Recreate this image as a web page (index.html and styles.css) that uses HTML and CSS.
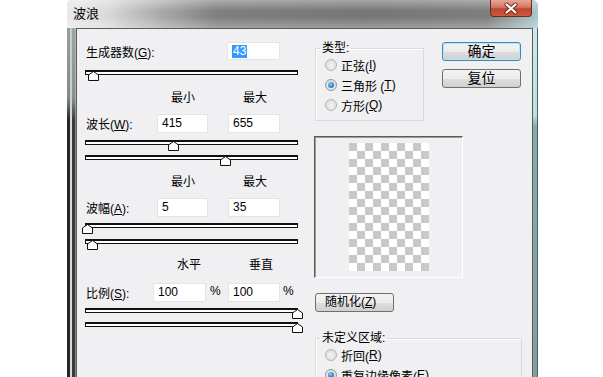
FILE: index.html
```html
<!DOCTYPE html>
<html>
<head>
  <meta charset="UTF-8" />
  <title>波浪</title>
  <link rel="stylesheet" href="styles.css">
</head>
<body>

<div class="window">
  <div class="titlebar">
    <span class="title">波浪</span>
    <div class="close-btn">
      <svg width="42" height="17" viewBox="0 0 42 17">
        <path d="M16.5 4.5 L25.5 12.5 M25.5 4.5 L16.5 12.5" stroke="#6a2219" stroke-width="4" stroke-linecap="round"/>
        <path d="M16.5 4.5 L25.5 12.5 M25.5 4.5 L16.5 12.5" stroke="#ffffff" stroke-width="2.2" stroke-linecap="round"/>
      </svg>
    </div>
  </div>

  <div class="frame">
    <div class="frame-left"></div>

    <div class="content">
      <!-- left column: numeric settings -->
      <div class="left-col">
        <div class="row row-gen">
          <span class="label label-gen">生成器数(<u>G</u>):</span>
          <div class="field field-gen"><span class="sel">43</span></div>
        </div>
        <div class="slider s1">
          <svg class="thumb" style="left:2px" width="11" height="10" viewBox="0 0 11 10"><polygon points="5.5,0.5 10.5,4 10.5,9.5 0.5,9.5 0.5,4"/></svg>
        </div>

        <div class="head head-minmax h1"><span>最小</span><span>最大</span></div>
        <div class="row row-wl">
          <span class="label label-wl">波长(<u>W</u>):</span>
          <div class="field f-min">415</div>
          <div class="field f-max">655</div>
        </div>
        <div class="slider s2">
          <svg class="thumb" style="left:82px" width="11" height="10" viewBox="0 0 11 10"><polygon points="5.5,0.5 10.5,4 10.5,9.5 0.5,9.5 0.5,4"/></svg>
        </div>
        <div class="slider s3">
          <svg class="thumb" style="left:134px" width="11" height="10" viewBox="0 0 11 10"><polygon points="5.5,0.5 10.5,4 10.5,9.5 0.5,9.5 0.5,4"/></svg>
        </div>

        <div class="head head-minmax h2"><span>最小</span><span>最大</span></div>
        <div class="row row-amp">
          <span class="label label-wl">波幅(<u>A</u>):</span>
          <div class="field f-min">5</div>
          <div class="field f-max">35</div>
        </div>
        <div class="slider s4">
          <svg class="thumb" style="left:-4px" width="11" height="10" viewBox="0 0 11 10"><polygon points="5.5,0.5 10.5,4 10.5,9.5 0.5,9.5 0.5,4"/></svg>
        </div>
        <div class="slider s5">
          <svg class="thumb" style="left:1px" width="11" height="10" viewBox="0 0 11 10"><polygon points="5.5,0.5 10.5,4 10.5,9.5 0.5,9.5 0.5,4"/></svg>
        </div>

        <div class="head head-scale"><span>水平</span><span>垂直</span></div>
        <div class="row row-scale">
          <span class="label label-scale">比例(<u>S</u>):</span>
          <div class="field f-sx">100</div>
          <span class="pct">%</span>
          <div class="field f-max">100</div>
          <span class="pct pct-last">%</span>
        </div>
        <div class="slider s6">
          <svg class="thumb" style="left:206px" width="11" height="10" viewBox="0 0 11 10"><polygon points="5.5,0.5 10.5,4 10.5,9.5 0.5,9.5 0.5,4"/></svg>
        </div>
        <div class="slider s7">
          <svg class="thumb" style="left:206px" width="11" height="10" viewBox="0 0 11 10"><polygon points="5.5,0.5 10.5,4 10.5,9.5 0.5,9.5 0.5,4"/></svg>
        </div>
      </div>

      <!-- right column: type, buttons, preview -->
      <div class="right-col">
        <div class="top-row">
          <fieldset class="group group-type">
            <legend>类型:</legend>
            <div class="radio"><span class="dot"></span>正弦(<u>I</u>)</div>
            <div class="radio"><span class="dot on"></span>三角形 (<u>T</u>)</div>
            <div class="radio"><span class="dot"></span>方形(<u>Q</u>)</div>
          </fieldset>
          <div class="buttons">
            <div class="btn btn-default">确定</div>
            <div class="btn btn-reset">复位</div>
          </div>
        </div>

        <div class="preview">
          <div class="checker"></div>
        </div>

        <div class="btn btn-random">随机化(<u>Z</u>)</div>

        <fieldset class="group group-undef">
          <legend>未定义区域:</legend>
          <div class="radio"><span class="dot"></span>折回(<u>R</u>)</div>
          <div class="radio"><span class="dot on"></span>重复边缘像素(<u>E</u>)</div>
        </fieldset>
      </div>
    </div>

    <div class="frame-right"></div>
  </div>
</div>

</body>
</html>
```

FILE: styles.css
```css
body {
  margin: 0;
  background: #ffffff;
  overflow: hidden;
  height: 377px;
  font-family: "Liberation Sans", "Noto Sans CJK SC", sans-serif;
  font-size: 12px;
  color: #000;
}
.window {
  margin-left: 67px;
  width: 471px;
  height: 420px;
  display: flex;
  flex-direction: column;
  border-top-left-radius: 6px;
  border-top-right-radius: 6px;
  overflow: hidden;
  background: #80a0a3;
}
.titlebar {
  height: 28px;
  flex: none;
  display: flex;
  align-items: flex-start;
  background:
    linear-gradient(to bottom, rgba(255,255,255,0.35) 0, rgba(255,255,255,0) 11px, rgba(255,255,255,0) 17px, rgba(255,255,255,0.28) 28px),
    linear-gradient(to right, #e9e9e9 0, #dadada 40px, #a9a9a9 95px, #7f7f7f 150px, #767676 300px, #7e7e7e 420px, #a9c9ce 471px);
}
.title {
  font-size: 13px;
  line-height: 14px;
  margin: 7px 0 0 6px;
}
.close-btn {
  margin-left: auto;
  margin-right: 6px;
  width: 42px;
  height: 17px;
  box-sizing: border-box;
  border: 1px solid #6d2a21;
  border-top: none;
  border-radius: 0 0 4px 4px;
  background: linear-gradient(to bottom, #e6a796 0, #d27863 45%, #c1432f 55%, #cc5a3f 100%);
}
.close-btn svg {
  display: block;
  margin: 0 0 0 -1px;
}
.frame {
  flex: 1;
  display: flex;
}
.frame-left {
  width: 9px;
  flex: none;
  background:
    linear-gradient(to bottom, rgba(190,202,198,0.75) 0, rgba(190,202,198,0.6) 70px, rgba(190,202,198,0) 92px),
    linear-gradient(to right, #262626 0 3px, #d6d9d8 3px 5px, #3a3a3a 5px 8px, #8c8c8c 8px 9px);
}
.frame-right {
  width: 5px;
  flex: none;
  box-sizing: border-box;
  border-right: 1px solid #4f6062;
  background: linear-gradient(to bottom, #cbe9ee 0, #b9dfe4 88px, #89aaad 98px, #7d9da0 100%);
}
.content {
  width: 457px;
  box-sizing: border-box;
  border: 1px solid #5c5c5c;
  border-bottom: none;
  background: #f0eff1;
  display: flex;
  align-items: flex-start;
}

/* left column */
.left-col {
  width: 215px;
  margin-left: 8px;
  flex: none;
}
.row {
  display: flex;
  align-items: center;
  height: 19px;
}
.label {
  padding-left: 1px;
  box-sizing: border-box;
  flex: none;
}
.label-gen { width: 142px; }
.label-wl { width: 72px; }
.label-scale { width: 68px; }
.field {
  height: 19px;
  box-sizing: border-box;
  background: #ffffff;
  border: 1px solid #e4e4e6;
  padding-left: 4px;
  line-height: 17px;
  flex: none;
}
.field-gen { width: 53px; height: 18px; line-height: 16px; }
.f-min { width: 51px; }
.f-max { width: 52px; margin-left: 20px; }
.f-sx { width: 53px; }
.row-scale .f-max { margin-left: 0; }
.sel {
  display: inline-block;
  background: #3399ff;
  color: #ffffff;
  line-height: 13px;
  padding: 0 1px;
}
.pct {
  width: 22px;
  box-sizing: border-box;
  padding-left: 4px;
  margin-top: -3px;
  flex: none;
}
.pct-last { padding-left: 3px; }
.row-gen { height: 18px; margin-top: 13px; }
.row-wl { margin-top: 8px; }
.row-amp { margin-top: 8px; }
.row-scale { margin-top: 10px; }

.head {
  display: flex;
  height: 16px;
  line-height: 16px;
  gap: 20px;
}
.head span {
  width: 52px;
  text-align: center;
}
.head-minmax { padding-left: 72px; }
.h1 { margin-top: 15px; }
.h2 { margin-top: 14px; }
.head-scale { padding-left: 78px; margin-top: 13px; }

.slider {
  position: relative;
  width: 213px;
  height: 5px;
  box-sizing: border-box;
  border: 1px solid #111;
  border-top-width: 2px;
  background: #ffffff;
}
.thumb {
  position: absolute;
  top: -1px;
}
.thumb polygon {
  fill: #ffffff;
  stroke: #111;
  stroke-width: 1;
}
.s1 { margin-top: 10px; }
.s2 { margin-top: 7px; }
.s3 { margin-top: 10px; }
.s4 { margin-top: 6px; }
.s5 { margin-top: 11px; }
.s6 { margin-top: 6px; }
.s7 { margin-top: 9px; }

/* right column */
.right-col {
  width: 208px;
  margin-left: 14px;
  flex: none;
}
.top-row {
  display: flex;
  align-items: flex-start;
}
.group {
  margin: 0 0 0 1px;
  padding: 0 0 5px 9px;
  border: 1px solid #d9d9dc;
  box-shadow: inset 1px 1px 0 #ffffff;
  min-width: 0;
}
.group legend {
  padding: 0 2px;
  margin-left: -5px;
  line-height: 14px;
}
.group-type {
  width: 109px;
  box-sizing: border-box;
  margin-top: 12px;
}
.group-undef {
  width: 207px;
  box-sizing: border-box;
  margin-top: 19px;
  padding-bottom: 20px;
}
.radio {
  display: flex;
  align-items: center;
  height: 20px;
}
.dot {
  width: 12px;
  height: 12px;
  box-sizing: border-box;
  border-radius: 50%;
  border: 1px solid #b4b4b4;
  background: radial-gradient(circle at 50% 55%, #f4f4f4 0, #e2e2e2 60%, #d0d0d0 100%);
  margin-right: 4px;
  display: flex;
  align-items: center;
  justify-content: center;
  flex: none;
}
.dot.on {
  border-color: #8a9aa8;
}
.dot.on::after {
  content: "";
  width: 6px;
  height: 6px;
  border-radius: 50%;
  background: radial-gradient(circle at 40% 35%, #8fd0f5 0, #3b87c4 55%, #1d4f80 100%);
}

.buttons {
  margin-left: 18px;
  margin-top: 13px;
}
.btn {
  width: 79px;
  height: 19px;
  box-sizing: border-box;
  border: 1px solid #707070;
  border-radius: 3px;
  background: linear-gradient(to bottom, #f3f3f3 0, #ebebeb 50%, #dedede 50%, #d0d0d0 100%);
  display: flex;
  align-items: center;
  justify-content: center;
  font-size: 14px;
  line-height: 17px;
}
.btn-default {
  border-color: #3a8bb3;
  box-shadow: inset 0 0 0 1px #b9e5f6;
}
.btn-reset { margin-top: 8px; }
.btn-random {
  margin: 15px 0 0 1px;
  font-size: 12px;
  justify-content: flex-start;
  padding-left: 9px;
}

.preview {
  margin-top: 15px;
  width: 149px;
  height: 142px;
  box-sizing: border-box;
  border: 1px solid;
  border-color: #5a5a5a #ffffff #ffffff #5a5a5a;
  box-shadow: inset 1px 1px 0 #9c9c9c;
  padding-top: 6px;
}
.checker {
  width: 80px;
  height: 128px;
  margin: 0 auto;
  background: repeating-conic-gradient(#ffffff 0 25%, #c9c9c9 0 50%) 0 0 / 16px 16px;
}
```
